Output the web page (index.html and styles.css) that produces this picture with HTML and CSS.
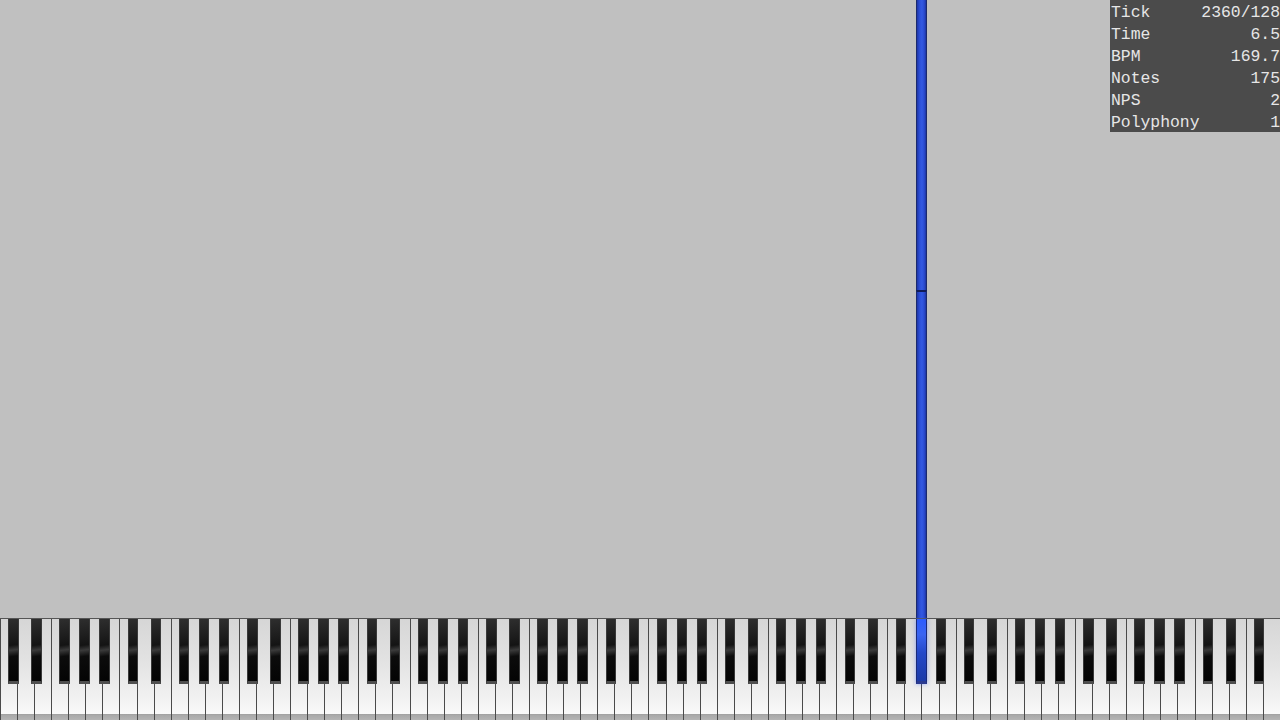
FILE: index.html
```html
<!DOCTYPE html>
<html>
<head>
<meta charset="utf-8">
<link rel="stylesheet" href="styles.css">
</head>
<body>
<div class="app">
  <div class="roll">
    <div class="note" style="top:0;height:290px"></div>
    <div class="note next" style="top:290px;height:328px"></div>
    <div class="stats">
      <div class="row"><span>Tick</span><span>2360/128</span></div>
      <div class="row"><span>Time</span><span>6.5</span></div>
      <div class="row"><span>BPM</span><span>169.7</span></div>
      <div class="row"><span>Notes</span><span>175</span></div>
      <div class="row"><span>NPS</span><span>2</span></div>
      <div class="row"><span>Polyphony</span><span>1</span></div>
    </div>
  </div>
  <div class="keyboard">
    <div class="oct"><div class="w"></div><div class="w"></div><div class="w"></div><div class="w"></div><div class="w"></div><div class="w"></div><div class="w"></div><div class="b cs"></div><div class="b ds"></div><div class="b fs"></div><div class="b gs"></div><div class="b as"></div></div>
    <div class="oct"><div class="w"></div><div class="w"></div><div class="w"></div><div class="w"></div><div class="w"></div><div class="w"></div><div class="w"></div><div class="b cs"></div><div class="b ds"></div><div class="b fs"></div><div class="b gs"></div><div class="b as"></div></div>
    <div class="oct"><div class="w"></div><div class="w"></div><div class="w"></div><div class="w"></div><div class="w"></div><div class="w"></div><div class="w"></div><div class="b cs"></div><div class="b ds"></div><div class="b fs"></div><div class="b gs"></div><div class="b as"></div></div>
    <div class="oct"><div class="w"></div><div class="w"></div><div class="w"></div><div class="w"></div><div class="w"></div><div class="w"></div><div class="w"></div><div class="b cs"></div><div class="b ds"></div><div class="b fs"></div><div class="b gs"></div><div class="b as"></div></div>
    <div class="oct"><div class="w"></div><div class="w"></div><div class="w"></div><div class="w"></div><div class="w"></div><div class="w"></div><div class="w"></div><div class="b cs"></div><div class="b ds"></div><div class="b fs"></div><div class="b gs"></div><div class="b as"></div></div>
    <div class="oct"><div class="w"></div><div class="w"></div><div class="w"></div><div class="w"></div><div class="w"></div><div class="w"></div><div class="w"></div><div class="b cs"></div><div class="b ds"></div><div class="b fs"></div><div class="b gs"></div><div class="b as"></div></div>
    <div class="oct"><div class="w"></div><div class="w"></div><div class="w"></div><div class="w"></div><div class="w"></div><div class="w"></div><div class="w"></div><div class="b cs"></div><div class="b ds"></div><div class="b fs"></div><div class="b gs"></div><div class="b as"></div></div>
    <div class="oct"><div class="w"></div><div class="w"></div><div class="w"></div><div class="w"></div><div class="w"></div><div class="w"></div><div class="w"></div><div class="b cs"></div><div class="b ds"></div><div class="b fs"></div><div class="b gs on"></div><div class="b as"></div></div>
    <div class="oct"><div class="w"></div><div class="w"></div><div class="w"></div><div class="w"></div><div class="w"></div><div class="w"></div><div class="w"></div><div class="b cs"></div><div class="b ds"></div><div class="b fs"></div><div class="b gs"></div><div class="b as"></div></div>
    <div class="oct"><div class="w"></div><div class="w"></div><div class="w"></div><div class="w"></div><div class="w"></div><div class="w"></div><div class="w"></div><div class="b cs"></div><div class="b ds"></div><div class="b fs"></div><div class="b gs"></div><div class="b as"></div></div>
    <div class="oct last"><div class="w"></div><div class="w"></div><div class="w"></div><div class="w"></div><div class="w"></div><div class="b cs"></div><div class="b ds"></div><div class="b fs"></div></div>
  </div>
</div>
</body>
</html>
```

FILE: styles.css
```css
html, body {
  margin: 0;
  padding: 0;
  width: 1280px;
  height: 720px;
  overflow: hidden;
  background: #c0c0c0;
}

.app {
  width: 1280px;
  height: 720px;
  display: flex;
  flex-direction: column;
}

.roll {
  position: relative;
  height: 618px;
  flex: none;
  background: #c0c0c0;
}

.note {
  position: absolute;
  left: 916px;
  width: 11px;
  box-sizing: border-box;
  border-left: 1px solid #1a2a6e;
  border-right: 1px solid #1a2a6e;
  background: linear-gradient(to right, #1f36a8 0%, #2c50d8 30%, #3359e2 55%, #2a4bd0 80%, #1e34a0 100%);
}

.note.next {
  border-top: 2px solid #101c58;
}

.stats {
  position: absolute;
  top: 0;
  right: 0;
  width: 170px;
  height: 132px;
  background: #4b4b4b;
  color: #e6e6e6;
  font-family: "Liberation Mono", "DejaVu Sans Mono", monospace;
  font-size: 16.4px;
  overflow: hidden;
}

.row {
  height: 22px;
  line-height: 25px;
  display: flex;
  justify-content: space-between;
  padding-left: 1px;
  white-space: nowrap;
}

.keyboard {
  flex: none;
  height: 102px;
  display: flex;
  border-top: 1px solid #555;
  box-sizing: border-box;
  background: #999;
}

.oct {
  position: relative;
  display: flex;
  width: 119.4667px;
  height: 100%;
  flex: none;
}

.oct.last {
  width: 85.3333px;
}

.w {
  flex: 1;
  box-sizing: border-box;
  border-left: 1px solid #4a4a4a;
  background:
    linear-gradient(to bottom, transparent 0, transparent 95px, #9d9d9d 95px, #a8a8a8 96px, #b4b4b4 101px),
    linear-gradient(to bottom, #d6d6d6 0%, #e2e2e2 40%, #f2f2f2 80%, #f9f9f9 93%);
}

.b {
  position: absolute;
  top: 0;
  width: 10.3px;
  height: 65px;
  box-sizing: border-box;
  border: 1px solid #3a3a3a;
  border-top: none;
  border-bottom: 3px solid #4e4e4e;
  background: linear-gradient(172deg, #2e2e2e 0%, #1c1c1c 30%, #141414 42%, #3a3a3a 50%, #0c0c0c 60%, #040404 100%);
}

.cs { left: 8.4px; }
.ds { left: 31.4px; }
.fs { left: 59.4px; }
.gs { left: 79.4px; }
.as { left: 99.4px; }

.b.on {
  width: 11px;
  left: 79.6px;
  border-color: #1a2a78;
  border-bottom: 3px solid #2a3a90;
  background: linear-gradient(to bottom, #2c5cff 0%, #3a64f0 25%, #2448c8 55%, #1c3aa8 100%);
  box-shadow: 0 0 4px rgba(60, 100, 255, 0.5);
}
```
